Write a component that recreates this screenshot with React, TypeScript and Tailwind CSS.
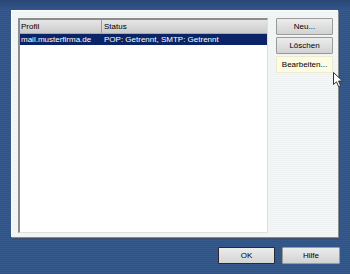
const font = { fontFamily: '"Liberation Sans", Arial, sans-serif' };

function Btn({ label, variant = "normal" }: { label: string; variant?: "normal" | "hover" | "default" }) {
  const tone =
    variant === "hover"
      ? "bg-[#fdfbe2] border-[#ecebd0]"
      : variant === "default"
        ? "bg-[linear-gradient(180deg,#ececec,#d4d4d4)] border-[#2a2a2a]"
        : "bg-[linear-gradient(180deg,#ececec,#d2d2d2)] border-[#9a9a9a]";
  return (
    <div className={`h-[17px] flex items-center justify-center border rounded-[1px] text-[8px] text-black ${tone}`}>
      {label}
    </div>
  );
}

export default function App() {
  return (
    <div
      style={font}
      className="relative w-[350px] h-[274px] overflow-hidden bg-[repeating-linear-gradient(180deg,#375a8d_0px,#375a8d_1px,#305285_1px,#305285_2px)]"
    >
      <div className="h-[10px] bg-[linear-gradient(180deg,#2a4877,#33558a)]" />
      <div className="pl-[11px]">
        <div className="w-[327px] h-[227px] flex gap-[8px] pt-[7px] pl-[6px] bg-[repeating-linear-gradient(180deg,#f5f7f7_0px,#f5f7f7_1px,#eff2f2_1px,#eff2f2_2px)] border-l border-t border-[#fbfbfb] shadow-[1px_1px_0_#8a8a8a,2px_2px_0_#3f4f66]">
          <div className="w-[250px] h-[215px] bg-white border-l-2 border-t-2 border-[#8c8c8c] border-r border-b border-r-[#dedede] border-b-[#dedede]">
            <div className="flex h-[14px] text-[8px] text-black bg-[linear-gradient(180deg,#e6e6e6,#cbcbcb)] border-b border-[#a8a8a8]">
              <div className="w-[82px] pl-[1px] flex items-center border-r border-[#9a9a9a]">Profil</div>
              <div className="flex-1 pl-[2px] flex items-center">Status</div>
            </div>
            <div className="flex h-[11px] text-[8px] text-white bg-[#0b2467] items-center">
              <div className="w-[82px] pl-[1px]">mail.musterfirma.de</div>
              <div className="flex-1 pl-[2px]">POP: Getrennt, SMTP: Getrennt</div>
            </div>
          </div>
          <div className="w-[57px] flex flex-col gap-[2px]">
            <Btn label="Neu..." />
            <Btn label="Löschen" />
            <Btn label="Bearbeiten..." variant="hover" />
          </div>
        </div>
      </div>
      <div className="flex justify-end gap-[7px] pr-[10px] mt-[10px]">
        <div className="w-[57px]">
          <Btn label="OK" variant="default" />
        </div>
        <div className="w-[58px]">
          <Btn label="Hilfe" />
        </div>
      </div>
      <svg className="absolute left-[333px] top-[72px]" width="12" height="17" viewBox="0 0 12 17">
        <path d="M0.5 0.5 L0.5 12.5 L3.5 9.8 L5.6 14.6 L7.6 13.7 L5.6 9 L9.5 9 Z" fill="#fff" stroke="#333" strokeWidth="1" />
      </svg>
    </div>
  );
}
